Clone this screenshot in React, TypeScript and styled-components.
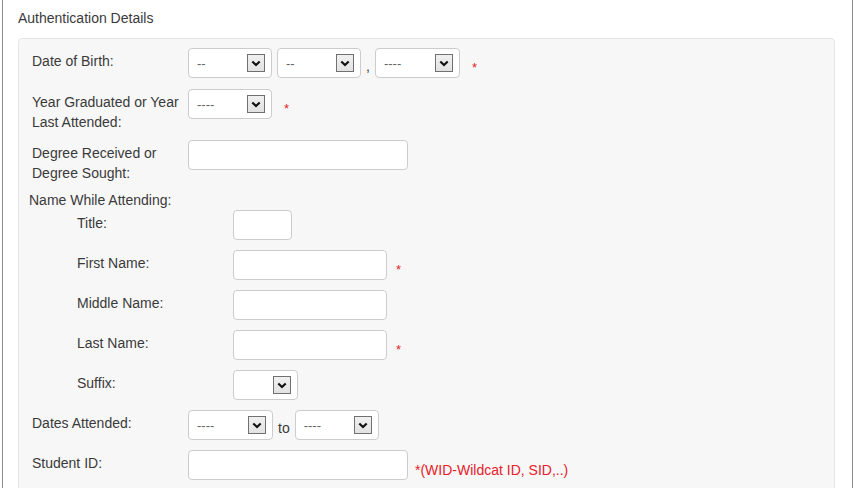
import React from "react";
import styled, { createGlobalStyle } from "styled-components";

const GlobalStyle = createGlobalStyle`
  html, body {
    margin: 0;
    padding: 0;
    background: #fff;
    overflow: hidden;
  }
  body {
    font-family: "Liberation Sans", Arial, sans-serif;
    font-size: 14px;
    color: #3a3a3a;
  }
`;

const Page = styled.div`
  margin-left: 2px;
  min-height: 100vh;
  border-left: 1px solid #8c8c8c;
  border-right: 1px solid #8c8c8c;
  padding: 8px 17px 0 15px;
  box-sizing: border-box;
`;

const Heading = styled.div`
  font-size: 14px;
  line-height: 20px;
  color: #3a3a3a;
  margin-bottom: 10px;
`;

const Panel = styled.div`
  background: #f7f7f7;
  border: 1px solid #e6e6e6;
  border-radius: 4px;
  padding: 9px 13px 30px;
`;

const Row = styled.div<{ $mb?: number }>`
  display: flex;
  align-items: flex-start;
  margin-bottom: ${({ $mb }) => ($mb ?? 10)}px;
`;

const Label = styled.div`
  width: 156px;
  flex-shrink: 0;
  padding-top: 3px;
  line-height: 20px;
  font-size: 14px;
  color: #3a3a3a;
`;

const GroupTitle = styled.div`
  margin-left: -3px;
  line-height: 16px;
  font-size: 14px;
  color: #3a3a3a;
`;

const SubGroup = styled.div`
  padding-left: 45px;
`;

const Controls = styled.div`
  display: flex;
  align-items: flex-start;
  gap: 5px;
`;

const SelectBox = styled.div<{ $w: number }>`
  display: flex;
  align-items: center;
  justify-content: space-between;
  width: ${({ $w }) => $w}px;
  height: 30px;
  box-sizing: border-box;
  border: 1px solid #cccccc;
  border-radius: 4px;
  background: #fff;
  padding: 0 6px 0 8px;
  color: #666;
  font-size: 13px;
`;

const ArrowBox = styled.span`
  display: flex;
  align-items: center;
  justify-content: center;
  width: 18px;
  height: 18px;
  box-sizing: border-box;
  border: 1px solid #707070;
  background: linear-gradient(#f0f0f0, #e2e2e2);
`;

const TextInput = styled.input<{ $w: number }>`
  width: ${({ $w }) => $w}px;
  height: 30px;
  box-sizing: border-box;
  border: 1px solid #cccccc;
  border-radius: 4px;
  background: #fff;
  padding: 0 8px;
  margin: 0;
  font-family: inherit;
  font-size: 14px;
  outline: none;
`;

const Inline = styled.span`
  padding-top: 8px;
  line-height: 20px;
  font-size: 14px;
  color: #3a3a3a;
`;

const Req = styled.span<{ $ml?: number }>`
  margin-left: ${({ $ml }) => ($ml ?? 7)}px;
  padding-top: 10px;
  line-height: 20px;
  font-size: 13px;
  color: #e02424;
`;

const Hint = styled.span`
  margin-left: 2px;
  padding-top: 10px;
  line-height: 20px;
  font-size: 14px;
  color: #e8202a;
`;

function Chevron() {
  return (
    <svg width="10" height="7" viewBox="0 0 10 7">
      <path d="M1.3 1.4 L5 5.1 L8.7 1.4" fill="none" stroke="#111" strokeWidth="2.1" />
    </svg>
  );
}

function Select({ w, value }: { w: number; value: string }) {
  return (
    <SelectBox $w={w}>
      <span>{value}</span>
      <ArrowBox>
        <Chevron />
      </ArrowBox>
    </SelectBox>
  );
}

export default function App() {
  return (
    <>
      <GlobalStyle />
      <Page>
        <Heading>Authentication Details</Heading>
        <Panel>
          <Row $mb={11}>
            <Label>Date of Birth:</Label>
            <Controls>
              <Select w={84} value="--" />
              <Select w={84} value="--" />
              <Inline>,</Inline>
              <Select w={85} value="----" />
              <Req>*</Req>
            </Controls>
          </Row>

          <Row $mb={8}>
            <Label>Year Graduated or Year Last Attended:</Label>
            <Controls>
              <Select w={84} value="----" />
              <Req>*</Req>
            </Controls>
          </Row>

          <Row $mb={9}>
            <Label>Degree Received or Degree Sought:</Label>
            <Controls>
              <TextInput $w={220} />
            </Controls>
          </Row>

          <Row $mb={2}>
            <GroupTitle>Name While Attending:</GroupTitle>
          </Row>

          <SubGroup>
            <Row>
              <Label>Title:</Label>
              <TextInput $w={59} />
            </Row>
            <Row>
              <Label>First Name:</Label>
              <Controls>
                <TextInput $w={154} />
                <Req $ml={4}>*</Req>
              </Controls>
            </Row>
            <Row>
              <Label>Middle Name:</Label>
              <TextInput $w={154} />
            </Row>
            <Row>
              <Label>Last Name:</Label>
              <Controls>
                <TextInput $w={154} />
                <Req $ml={4}>*</Req>
              </Controls>
            </Row>
            <Row>
              <Label>Suffix:</Label>
              <Select w={65} value="" />
            </Row>
          </SubGroup>

          <Row>
            <Label>Dates Attended:</Label>
            <Controls>
              <Select w={85} value="----" />
              <Inline>to</Inline>
              <Select w={84} value="----" />
            </Controls>
          </Row>

          <Row>
            <Label>Student ID:</Label>
            <Controls>
              <TextInput $w={220} />
              <Hint>*(WID-Wildcat ID, SID,..)</Hint>
            </Controls>
          </Row>
        </Panel>
      </Page>
    </>
  );
}
